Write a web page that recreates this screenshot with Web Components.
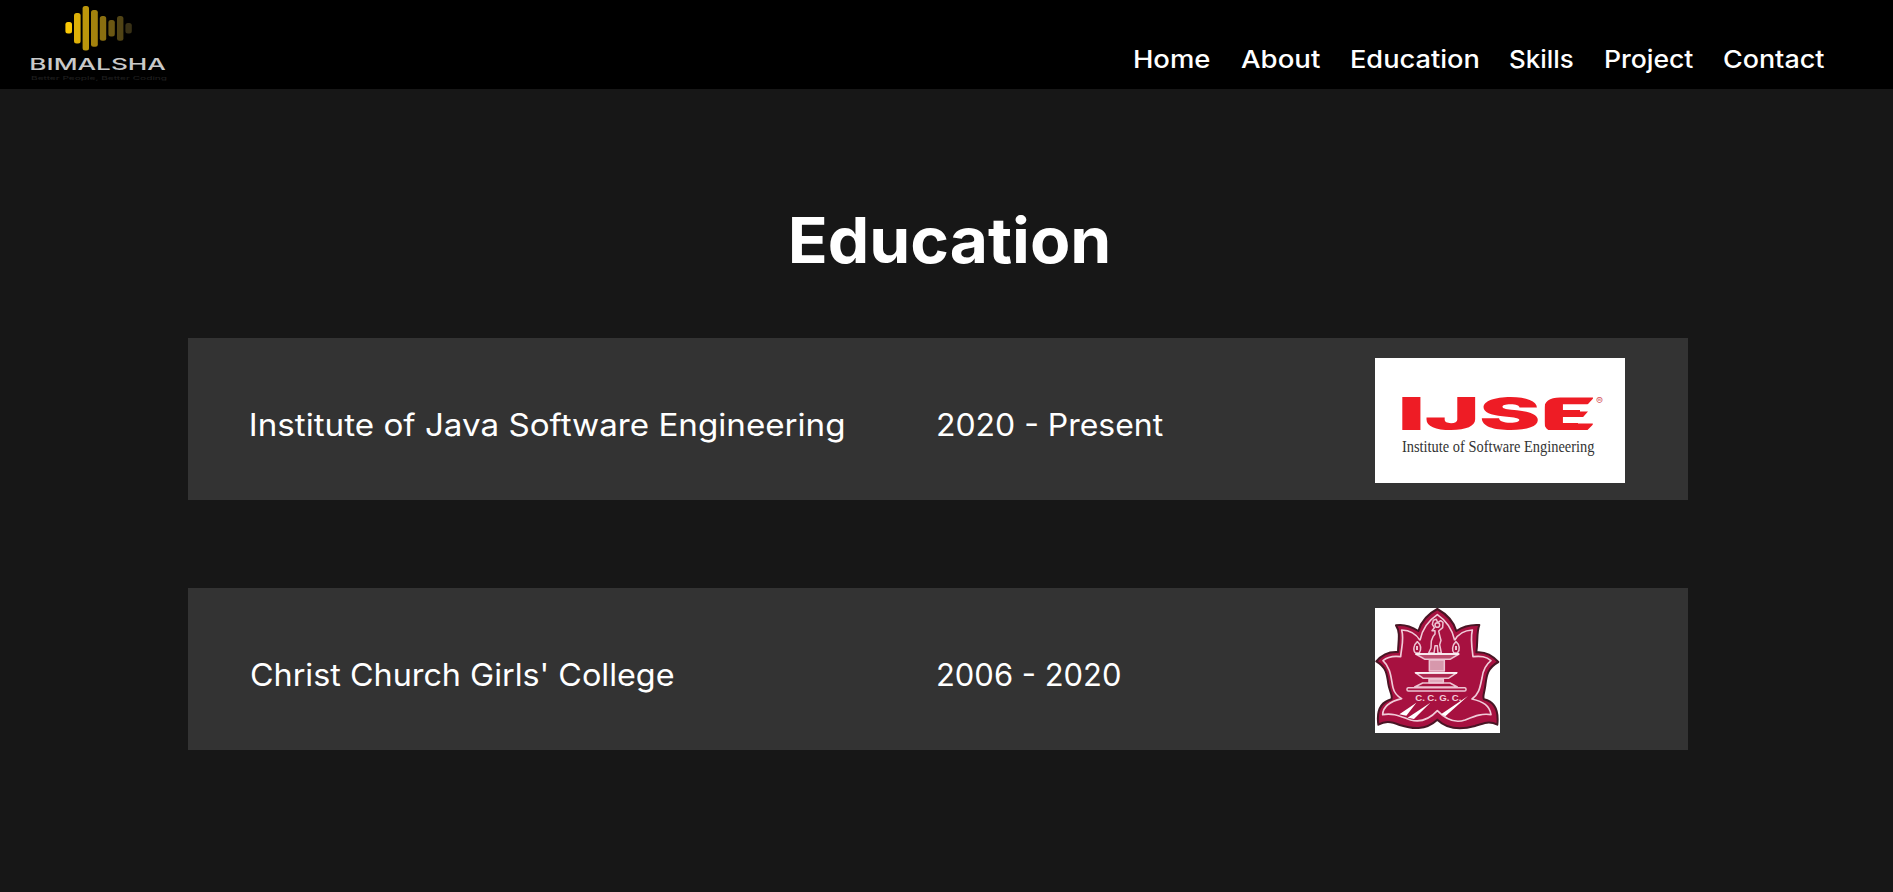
<!DOCTYPE html>
<html lang="en">
<head>
<meta charset="utf-8">
<title>Education</title>
<style>
html,body{margin:0;background:#171717;color:#fff;font-family:Inter,"Liberation Sans",sans-serif}
body{height:892px;overflow:hidden}
</style>
</head>
<body>
<portfolio-page></portfolio-page>
<script>
const define = (name, html) => customElements.define(name, class extends HTMLElement {
  constructor() {
    super();
    this.attachShadow({ mode: 'open' }).innerHTML = html;
  }
});

/* Text whose capitals fill the box: ink = drawn width, cap = capital height. */
customElements.define('fit-text', class extends HTMLElement {
  connectedCallback() {
    const ink = +this.getAttribute('ink'), cap = +this.getAttribute('cap');
    const weight = this.getAttribute('weight') || 400;
    const family = this.getAttribute('family') || 'Inter';
    const ratio = family === 'Inter' ? 0.727 : 0.66;
    const size = cap / ratio;
    const ctx = document.createElement('canvas').getContext('2d');
    ctx.font = `${weight} ${size}px "${family}"`;
    const m = ctx.measureText(this.textContent);
    const scale = ink / (m.actualBoundingBoxRight + m.actualBoundingBoxLeft);
    this.attachShadow({ mode: 'open' }).innerHTML = `<style>
      :host{display:block;flex:none;width:${ink}px;height:${cap}px}
      span{display:block;width:max-content;white-space:nowrap;font:${weight} ${size}px/${cap}px "${family}",sans-serif;
        transform-origin:0 50%;transform:translateX(${m.actualBoundingBoxLeft * scale}px) scaleX(${scale})}
      </style><span><slot></slot></span>`;
  }
});

define('brand-logo', `<style>
  :host{display:block;width:136px}
  svg{display:block;width:68px;height:46px;margin:5px 0 8px 34px}
  .name{color:#c9c9c9}
  .tag{color:#202020;margin-top:6px}
  </style>
  <svg viewBox="0 0 68 46">
    <rect x="0.4" y="17" width="6.6" height="11.5" rx="2.5" fill="#fac806"/>
    <rect x="9" y="8" width="6.6" height="30.5" rx="2.5" fill="#ddb008"/>
    <rect x="17.6" y="1" width="6.4" height="44.4" rx="2.5" fill="#bc960b"/>
    <rect x="26" y="5" width="6.8" height="36.8" rx="2.5" fill="#a3820d"/>
    <rect x="34.8" y="11" width="6.4" height="24.7" rx="2.5" fill="#8a6f10"/>
    <rect x="43.4" y="15" width="6.4" height="16.6" rx="2.5" fill="#6c5813"/>
    <rect x="52" y="11" width="6.4" height="24.7" rx="2.5" fill="#514415"/>
    <rect x="60.4" y="18" width="6.4" height="10.4" rx="2.5" fill="#393116"/>
  </svg>
  <fit-text class="name" ink="134.5" cap="11.5" weight="500">BIMALSHA</fit-text>
  <fit-text class="tag" ink="136" cap="3.6">Better People, Better Coding</fit-text>`);

define('site-header', `<style>
  :host{display:flex;justify-content:space-between;align-items:flex-start;box-sizing:border-box;height:89px;background:#000;padding:0 69px 0 30.5px}
  nav{display:flex;gap:31.5px;padding-top:51.3px}
  .home{margin-right:-1px}
  </style>
  <brand-logo></brand-logo>
  <nav>
    <fit-text class="home" ink="76" cap="17.8" weight="500">Home</fit-text>
    <fit-text ink="79" cap="17.8" weight="500">About</fit-text>
    <fit-text ink="127" cap="17.8" weight="500">Education</fit-text>
    <fit-text ink="63.5" cap="17.8" weight="500">Skills</fit-text>
    <fit-text ink="88" cap="17.8" weight="500">Project</fit-text>
    <fit-text ink="100" cap="17.8" weight="500">Contact</fit-text>
  </nav>`);

define('education-row', `<style>
  :host{display:grid;grid-template-columns:686.5px 437.5px 1fr;box-sizing:border-box;width:1500px;height:162px;padding-left:63px;background:#333}
  .txt{padding-top:76px}
  .pic{padding-top:20px}
  </style>
  <div class="txt"><slot name="school"></slot></div>
  <div class="txt"><slot name="years"></slot></div>
  <div class="pic"><slot name="badge"></slot></div>`);

define('ijse-badge', `<style>
  :host{display:block;box-sizing:border-box;width:250px;height:125px;background:#fff;padding:40.5px 0 0 27px}
  .top{display:flex;gap:1.5px;color:#ee1c25}
  /* rounds the left side of the E and slants the ends of its arms */
  .word{clip-path:path("M0 -2H137V35H0ZM158 -1H192L181 11H178V13H186L178 22H176V25H192L183 34H158Q142 34 142 23V11Q142 -1 158 -1Z")}
  .reg{color:#d5555c}
  .sub{color:#333;margin-top:10px}
  </style>
  <div class="top"><fit-text class="word" ink="192" cap="32.5" weight="900">IJSE</fit-text><fit-text class="reg" ink="7" cap="6.5">®</fit-text></div>
  <fit-text class="sub" family="Liberation Serif" ink="193" cap="11">Institute of Software Engineering</fit-text>`);

define('college-badge', `<style>
  :host{display:block;width:125px;height:125px;background:#fff}
  svg{display:block}
  </style>
  <svg width="125" height="125" viewBox="0 0 375 375" fill="none" stroke-linejoin="round">
    <path d="M187 3C216 19 235 38 244 69C263 56 285 49 313 51C304 75 309 99 304 133C332 130 352 142 370 162C332 183 335 210 330 239C327 258 322 266 327 274C362 282 371 313 367 350C343 338 326 345 300 354C260 365 220 367 187 335C151 368 112 363 74 351C46 339 29 339 10 350C5 314 11 284 49 274C55 263 42 247 40 228C36 196 33 177 4 160C23 137 43 130 69 132C70 98 77 73 63 52C91 47 111 57 130 69C140 37 160 17 187 3Z" fill="#a71140" stroke="#481524" stroke-width="6"/>
    <g stroke="#f0cbd8" stroke-width="5">
      <path d="M135 97C142 61 160 38 187 20C214 38 231 61 239 97M135 97C123 77 104 67 80 66C88 96 79 117 77 146C55 143 38 146 24 158C49 180 48 215 54 239C58 256 69 266 80 272C47 280 24 294 23 320C56 313 82 328 107 336C139 345 163 334 187 308C213 335 238 347 270 336C298 325 320 315 348 320C344 293 325 281 291 273C313 258 315 237 321 210C324 185 331 171 348 158C333 145 318 144 294 146C290 117 286 91 292 66C270 67 250 77 239 97"/>
    </g>
    <g stroke="#edc4d2" stroke-width="4.5">
      <path d="M171 68L178 59L172 49L175 37L184 34L188 44L197 38L204 43L203 59L191 69L194 82L198 97L194 110L199 135H189L187 113L180 113L177 135H161L168 120L169 99L174 86L180 78V68Z"/>
      <circle cx="187" cy="51" r="7"/>
      <path d="M127 101C114 112 114 129 122 135H133C139 124 138 111 127 101ZM243 101C230 112 231 129 237 135H247C256 126 254 110 243 101Z"/>
      <path d="M126 114V126M243 114V126" stroke-width="6"/>
      <path d="M122 138H252L225 154H150Z" fill="#bb4b6c"/>
      <path d="M163 156H208V189H163Z" fill="#d798ac"/>
      <path d="M121 194H246L220 211H145Z" fill="#ae2850"/>
      <path d="M162 213H205V224H162Z" fill="#e1a8bb"/>
      <path d="M143 225H225L247 237H119Z"/>
      <rect x="96" y="239" width="177" height="10" rx="4"/>
      <path d="M122 138H252M121 195H246" stroke="#fff" stroke-width="5"/>
    </g>
    <g fill="#fff"><path d="M124 284L73 319L94 323ZM166 284L98 329L117 333ZM279 264L198 319L211 325Z"/></g>
    <text x="121" y="279" textLength="138" font-family="Liberation Sans, sans-serif" font-size="29" font-weight="700" fill="#f1cbd8">C. C. G. C.</text>
  </svg>`);

define('portfolio-page', `<style>
  :host{display:block}
  main{display:flex;flex-direction:column;padding:129px 0 0 188px}
  .title{margin-left:604px}
  .list{display:flex;flex-direction:column;gap:88px;margin-top:74.2px}
  </style>
  <site-header></site-header>
  <main>
    <fit-text class="title" ink="316" cap="45.8" weight="700">Education</fit-text>
    <section class="list">
      <education-row>
        <fit-text slot="school" ink="592.5" cap="22.4">Institute of Java Software Engineering</fit-text>
        <fit-text slot="years" ink="225" cap="22.4">2020 - Present</fit-text>
        <ijse-badge slot="badge"></ijse-badge>
      </education-row>
      <education-row>
        <fit-text slot="school" ink="422.5" cap="22.4">Christ Church Girls' College</fit-text>
        <fit-text slot="years" ink="182" cap="22.4">2006 - 2020</fit-text>
        <college-badge slot="badge"></college-badge>
      </education-row>
    </section>
  </main>`);
</script>
</body>
</html>
